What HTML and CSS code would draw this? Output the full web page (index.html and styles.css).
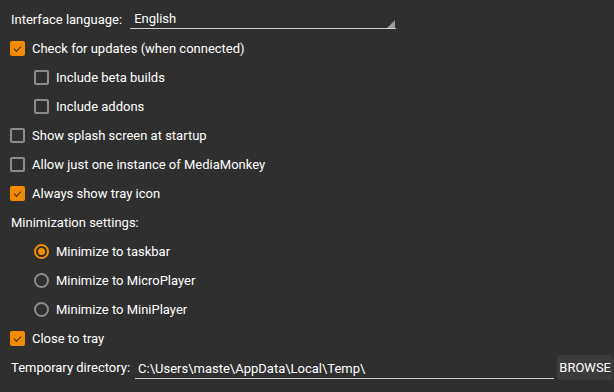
FILE: index.html
```html
<!DOCTYPE html>
<html lang="en">
<head>
    <meta charset="UTF-8">
    <meta name="viewport" content="width=device-width, initial-scale=1.0">
    <title>Options</title>
    <link rel="stylesheet" href="styles.css">
</head>
<body>
    <div class="panel">
        <div class="row">
            <span class="label">Interface language:</span>
            <div class="dropdown">
                <span>English</span>
                <span class="arrow"></span>
            </div>
        </div>

        <div class="row"><span class="check on"></span>Check for updates (when connected)</div>
        <div class="row indent"><span class="check"></span>Include beta builds</div>
        <div class="row indent"><span class="check"></span>Include addons</div>
        <div class="row"><span class="check"></span>Show splash screen at startup</div>
        <div class="row"><span class="check"></span>Allow just one instance of MediaMonkey</div>
        <div class="row"><span class="check on"></span>Always show tray icon</div>

        <div class="row"><span class="label">Minimization settings:</span></div>
        <div class="row indent"><span class="radio on"></span>Minimize to taskbar</div>
        <div class="row indent"><span class="radio"></span>Minimize to MicroPlayer</div>
        <div class="row indent"><span class="radio"></span>Minimize to MiniPlayer</div>

        <div class="row"><span class="check on"></span>Close to tray</div>

        <div class="row">
            <span class="label">Temporary directory:</span>
            <div class="path">C:\Users\maste\AppData\Local\Temp\</div>
            <button class="browse">BROWSE</button>
        </div>
    </div>
</body>
</html>
```

FILE: styles.css
```css
html, body {
    margin: 0;
    background: #2f2f2f;
}
body {
    font-family: Roboto, "Liberation Sans", sans-serif;
    font-size: 13px;
    color: #fff;
}
.panel {
    display: flex;
    flex-direction: column;
    padding: 5px 1px 0 10px;
}
.row {
    display: flex;
    align-items: center;
    height: 29px;
    white-space: nowrap;
}
.indent {
    padding-left: 24px;
}
.label {
    flex-shrink: 0;
    padding-left: 1px;
}
.dropdown {
    position: relative;
    width: 262px;
    margin-left: 8px;
    margin-top: 1px;
    padding: 0 0 2px 4px;
    border-bottom: 1px solid #cfcfcf;
}
.arrow {
    position: absolute;
    right: 1px;
    bottom: 0;
    width: 0;
    height: 0;
    border-left: 8px solid transparent;
    border-bottom: 8px solid #9a9a9a;
}
.check {
    box-sizing: border-box;
    flex-shrink: 0;
    width: 15px;
    height: 15px;
    margin-right: 7px;
    border: 2px solid #8c8c8c;
    border-radius: 2px;
    position: relative;
}
.check.on {
    background: #f38b00;
    border-color: #f38b00;
}
.check.on::after {
    content: "";
    position: absolute;
    left: 2px;
    top: 0;
    width: 6px;
    height: 3px;
    border-left: 1.5px solid #3a2a14;
    border-bottom: 1.5px solid #3a2a14;
    transform: translate(0, 3px) rotate(-45deg);
}
.radio {
    box-sizing: border-box;
    flex-shrink: 0;
    width: 15px;
    height: 15px;
    margin-right: 7px;
    border: 2px solid #8c8c8c;
    border-radius: 50%;
    position: relative;
}
.radio.on {
    border-color: #f38b00;
}
.radio.on::after {
    content: "";
    position: absolute;
    left: 2px;
    top: 2px;
    width: 7px;
    height: 7px;
    border-radius: 50%;
    background: #f38b00;
}
.path {
    flex: 1;
    margin-left: 5px;
    margin-top: 4px;
    padding: 0 0 2px 3px;
    border-bottom: 1px solid #cfcfcf;
}
.browse {
    flex-shrink: 0;
    margin-left: 3px;
    height: 25px;
    padding: 0 2px;
    border: none;
    border-radius: 3px;
    background: #3b3b3b;
    color: #fff;
    font-family: Roboto, "Liberation Sans", sans-serif;
    font-size: 13px;
}
```
